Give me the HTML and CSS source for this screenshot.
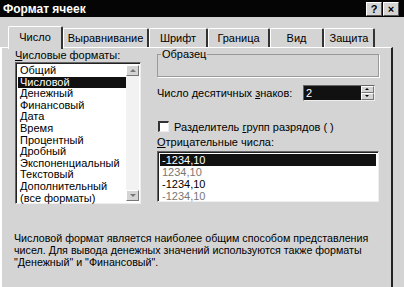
FILE: index.html
```html
<!DOCTYPE html>
<html>
<head>
    <title>Формат ячеек</title>
    <link rel="stylesheet" href="styles.css">
</head>
<body>
    <div class="dialog">
        <div class="titlebar">
            <span class="title">Формат ячеек</span>
            <div class="title-buttons">
                <span class="tbtn">?</span>
                <span class="tbtn">×</span>
            </div>
        </div>

        <div class="tabs">
            <span class="tab tab-number active">Число</span>
            <span class="tab tab-align">Выравнивание</span>
            <span class="tab tab-font">Шрифт</span>
            <span class="tab tab-border">Граница</span>
            <span class="tab tab-view">Вид</span>
            <span class="tab tab-protect">Защита</span>
        </div>

        <div class="panel">
            <div class="columns">
                <div class="left">
                    <div class="label"><u>Ч</u>исловые форматы:</div>
                    <div class="listbox formats">
                        <ul class="items">
                            <li>Общий</li>
                            <li class="selected">Числовой</li>
                            <li>Денежный</li>
                            <li>Финансовый</li>
                            <li>Дата</li>
                            <li>Время</li>
                            <li>Процентный</li>
                            <li>Дробный</li>
                            <li>Экспоненциальный</li>
                            <li>Текстовый</li>
                            <li>Дополнительный</li>
                            <li>(все форматы)</li>
                        </ul>
                        <div class="scrollbar">
                            <span class="arrow up"></span>
                            <span class="arrow down"></span>
                        </div>
                    </div>
                </div>

                <div class="right">
                    <fieldset class="sample">
                        <legend>Образец</legend>
                    </fieldset>

                    <div class="decimals">
                        <span>Число десятичных <u>з</u>наков:</span>
                        <div class="spin">
                            <span class="spin-value">2</span>
                            <div class="spin-buttons">
                                <span class="arrow up"></span>
                                <span class="arrow down"></span>
                            </div>
                        </div>
                    </div>

                    <label class="check">
                        <span class="checkbox"></span>
                        <span>Разделитель <u>г</u>рупп разрядов ( )</span>
                    </label>

                    <div class="label"><u>О</u>трицательные числа:</div>
                    <ul class="listbox negatives">
                        <li class="selected">-1234,10</li>
                        <li class="red">1234,10</li>
                        <li>-1234,10</li>
                        <li class="red">-1234,10</li>
                    </ul>
                </div>
            </div>

            <p class="desc">Числовой формат является наиболее общим способом представления
                чисел. Для вывода денежных значений используются также форматы
                "Денежный" и "Финансовый".</p>
        </div>
    </div>
</body>
</html>
```

FILE: styles.css
```css
body {
    margin: 0;
    background-color: #d4d4d4;
    font-family: "Liberation Sans", Arial, sans-serif;
    font-size: 11px;
    color: #000;
    overflow: hidden;
}

.dialog {
    width: 404px;
    height: 287px;
}

.titlebar {
    height: 17px;
    background-color: #050505;
    display: flex;
    align-items: center;
    justify-content: space-between;
    padding: 0 5px 0 3px;
}

.title {
    color: #fff;
    font-weight: bold;
    font-size: 12px;
}

.title-buttons {
    display: flex;
    gap: 1px;
}

.tbtn {
    width: 14px;
    height: 12px;
    background-color: #d4d4d4;
    border-top: 1px solid #fff;
    border-left: 1px solid #fff;
    border-right: 1px solid #555;
    border-bottom: 1px solid #555;
    font-size: 11px;
    font-weight: bold;
    line-height: 12px;
    text-align: center;
}

.tabs {
    display: flex;
    align-items: flex-end;
    height: 30px;
    padding-left: 8px;
    position: relative;
    z-index: 1;
}

.tab {
    height: 19px;
    line-height: 18px;
    text-align: center;
    border-top: 1px solid #fff;
    border-left: 1px solid #fff;
    border-right: 2px solid #333;
    border-radius: 2px 2px 0 0;
    box-sizing: border-box;
}

.tab-number { width: 55px; }
.tab-align { width: 86px; }
.tab-font { width: 59px; }
.tab-border { width: 62px; }
.tab-view { width: 54px; }
.tab-protect { width: 51px; }

.tab.active {
    height: 23px;
    line-height: 20px;
    margin-bottom: -2px;
    background-color: #d4d4d4;
}

.panel {
    border-top: 1px solid #fff;
    border-left: 2px solid #fff;
    border-right: 2px solid #222;
    width: 389px;
    height: 240px;
}

.columns {
    display: flex;
    padding: 1px 0 0 13px;
}

.left {
    width: 126px;
}

.label {
    height: 12px;
    line-height: 12px;
}

.listbox {
    background-color: #fff;
    border-top: 1px solid #666;
    border-left: 1px solid #666;
    border-right: 1px solid #eee;
    border-bottom: 1px solid #eee;
    box-shadow: inset 1px 1px 0 #222;
    box-sizing: border-box;
    margin: 0;
    padding: 0;
    list-style: none;
}

.formats {
    margin-top: 1px;
    height: 142px;
    display: flex;
    padding: 2px 1px 2px 2px;
}

.items {
    list-style: none;
    margin: 0;
    padding: 0;
    flex: 1;
}

.items li {
    height: 11.6px;
    line-height: 11.6px;
    padding-left: 2px;
}

.selected {
    background-color: #111;
    color: #fff;
}

.scrollbar {
    width: 13px;
    display: flex;
    flex-direction: column;
    justify-content: space-between;
    background-color: #f2f2f2;
}

.arrow {
    display: block;
    width: 13px;
    height: 11px;
    box-sizing: border-box;
    background-color: #d4d4d4;
    border-top: 1px solid #fff;
    border-left: 1px solid #fff;
    border-right: 1px solid #777;
    border-bottom: 1px solid #777;
    position: relative;
}

.arrow::after {
    content: "";
    position: absolute;
    left: 3px;
    top: 3px;
    border-left: 3px solid transparent;
    border-right: 3px solid transparent;
}

.arrow.up::after {
    border-bottom: 3px solid #777;
}

.arrow.down::after {
    border-top: 3px solid #777;
}

.right {
    margin-left: 16px;
    width: 222px;
}

.sample {
    margin: 0;
    padding: 0;
    height: 28px;
    box-sizing: border-box;
    border: 1px solid #999;
    box-shadow: 1px 1px 0 #fff;
}

.sample legend {
    padding: 0 1px;
    margin-left: 3px;
    line-height: 10px;
}

.decimals {
    display: flex;
    align-items: center;
    justify-content: space-between;
    margin-top: 7px;
    padding-right: 4px;
    height: 17px;
}

.spin {
    width: 72px;
    height: 16px;
    box-sizing: border-box;
    display: flex;
    background-color: #111;
    border-top: 1px solid #666;
    border-left: 1px solid #666;
    border-right: 1px solid #eee;
    border-bottom: 1px solid #eee;
}

.spin-value {
    flex: 1;
    color: #fff;
    padding-left: 2px;
    line-height: 14px;
}

.spin-buttons {
    display: flex;
    flex-direction: column;
}

.spin-buttons .arrow {
    height: 7px;
}

.spin-buttons .arrow::after {
    top: 1px;
    border-left-width: 2px;
    border-right-width: 2px;
    border-bottom-color: #000;
    border-top-color: #000;
    border-bottom-width: 2px;
    border-top-width: 2px;
}

.check {
    display: flex;
    align-items: center;
    gap: 5px;
    margin-top: 19px;
    height: 13px;
    margin-left: 1px;
}

.checkbox {
    width: 11px;
    height: 11px;
    box-sizing: border-box;
    background-color: #fff;
    border-top: 2px solid #333;
    border-left: 2px solid #333;
    border-right: 1px solid #eee;
    border-bottom: 1px solid #eee;
}

.check + .label {
    margin-top: 3px;
}

.negatives {
    margin-top: 3px;
    height: 51px;
    padding: 2px;
}

.negatives li {
    height: 12px;
    line-height: 12px;
    padding-left: 2px;
}

.negatives li.red {
    color: #777;
}

.desc {
    margin: 28px 0 0 12px;
    line-height: 12px;
    width: 370px;
    font-size: 10.7px;
}
```
